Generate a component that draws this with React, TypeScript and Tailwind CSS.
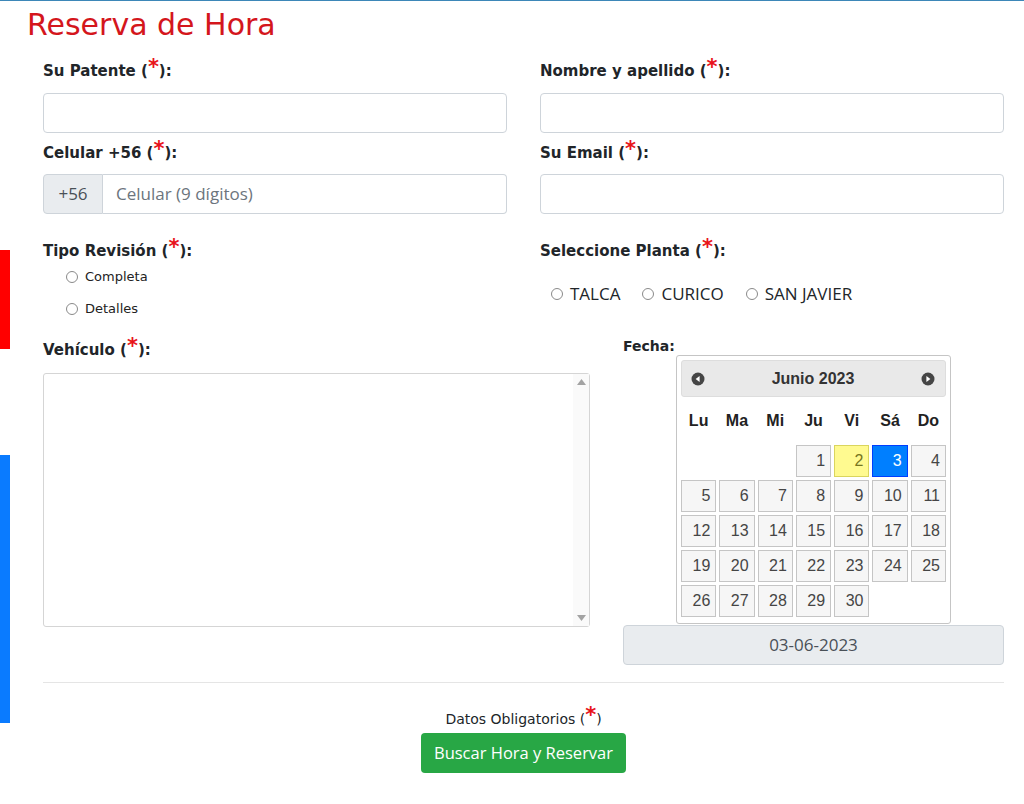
import React from 'react'

const verdana = { fontFamily: '"DejaVu Sans", Verdana, sans-serif' }
const segoe = { fontFamily: '"Open Sans", "Noto Sans", sans-serif' }
const arial = { fontFamily: '"Liberation Sans", Arial, sans-serif' }

function Req() {
  return <span className="relative top-[-2px] text-[21px] font-bold leading-[0] text-[#e8141b]">*</span>
}

function Label({ children }: { children: React.ReactNode }) {
  return (
    <label className="block h-[24px] text-[15px] font-bold leading-[22px] text-[#212529]" style={verdana}>
      {children}
    </label>
  )
}

function Radio({ label, className }: { label: string; className?: string }) {
  return (
    <span className={'flex items-center ' + (className ?? '')}>
      <span className="h-[12px] w-[12px] rounded-full border border-[#8a8a8a] bg-white" />
      <span className="ml-[7px]">{label}</span>
    </span>
  )
}

function Arrow({ dir }: { dir: 'prev' | 'next' }) {
  return (
    <svg width="14" height="14" viewBox="0 0 14 14">
      <circle cx="7" cy="7" r="6.5" fill="#454545" />
      {dir === 'prev' ? (
        <polygon points="8.6,4 4.6,7 8.6,10" fill="#fff" />
      ) : (
        <polygon points="5.4,4 9.4,7 5.4,10" fill="#fff" />
      )}
    </svg>
  )
}

function Calendar() {
  const days: (number | null)[] = [null, null, null]
  for (let d = 1; d <= 30; d++) days.push(d)
  const weekdays = ['Lu', 'Ma', 'Mi', 'Ju', 'Vi', 'Sá', 'Do']

  return (
    <div className="mx-auto mt-[2px] w-[275px] rounded-[3px] border border-[#c5c5c5] bg-white px-[4px] pb-[6px] pt-[4px]" style={arial}>
      <div className="flex h-[37px] items-center justify-between rounded-[3px] border border-[#dddddd] bg-[#e9e9e9] pl-[9px] pr-[10px]">
        <Arrow dir="prev" />
        <span className="text-[16px] font-bold text-[#333]">Junio 2023</span>
        <Arrow dir="next" />
      </div>
      <div className="grid h-[48px] grid-cols-7 items-center gap-x-[3px]">
        {weekdays.map((w) => (
          <span key={w} className="text-center text-[16px] font-bold text-[#222]">
            {w}
          </span>
        ))}
      </div>
      <div className="grid grid-cols-7 gap-x-[3px] gap-y-[3px]">
        {days.map((d, i) => {
          if (d === null) return <span key={i} className="h-[32px]" />
          let cls = 'border-[#c5c5c5] bg-[#f6f6f6] text-[#454545]'
          if (d === 2) cls = 'border-[#dad55e] bg-[#fffa90] text-[#777620]'
          if (d === 3) cls = 'border-[#003eff] bg-[#007fff] text-white'
          return (
            <span key={i} className={'flex h-[32px] items-center justify-end border pr-[5px] text-[16px] ' + cls}>
              {d}
            </span>
          )
        })}
      </div>
    </div>
  )
}

export default function App() {
  const input = 'block h-[40px] w-full rounded-[4px] border border-[#ced4da] bg-white'

  return (
    <div className="relative min-h-[804px] w-[1024px] overflow-hidden border-t border-[#3d87b8] bg-white">
      {/* side tabs */}
      <div className="absolute left-0 top-[249px] h-[99px] w-[10px] bg-[#ff0000]" />
      <div className="absolute left-0 top-[454px] h-[268px] w-[10px] bg-[#0a7bff]" />

      <h1 className="pl-[27px] pt-[6px] text-[30px] leading-[36px] text-[#d4161c]" style={verdana}>
        Reserva de Hora
      </h1>

      <div className="pl-[43px]">
        <div className="mt-[17px] grid grid-cols-[464px_464px] gap-x-[33px]">
          <div>
            <Label>
              Su Patente (<Req />):
            </Label>
            <input className={input + ' mt-[9px]'} />
            <div className="mt-[9px]">
              <Label>
                Celular +56 (<Req />):
              </Label>
            </div>
            <div className="mt-[8px] flex h-[40px] text-[17px]" style={segoe}>
              <span className="flex w-[60px] items-center justify-center rounded-l-[4px] border border-[#ced4da] bg-[#e9ecef] text-[#495057]">
                +56
              </span>
              <span className="flex flex-1 items-center rounded-r-[4px] border border-l-0 border-[#ced4da] pl-[13px] text-[#6c757d]">
                Celular (9 dígitos)
              </span>
            </div>
          </div>
          <div>
            <Label>
              Nombre y apellido (<Req />):
            </Label>
            <input className={input + ' mt-[9px]'} />
            <div className="mt-[9px]">
              <Label>
                Su Email (<Req />):
              </Label>
            </div>
            <input className={input + ' mt-[8px]'} />
          </div>
        </div>

        <div className="mt-[26px] grid grid-cols-[464px_464px] gap-x-[33px]">
          <div>
            <Label>
              Tipo Revisión (<Req />):
            </Label>
            <div className="flex flex-col gap-[6px] pl-[23px] text-[13px] text-[#222]" style={verdana}>
              <Radio label="Completa" className="h-[26px]" />
              <Radio label="Detalles" className="h-[26px]" />
            </div>
          </div>
          <div>
            <Label>
              Seleccione Planta (<Req />):
            </Label>
            <div className="mt-[18px] flex h-[24px] items-center gap-x-[22px] pl-[11px] text-[17px] text-[#212529]" style={segoe}>
              <Radio label="TALCA" />
              <Radio label="CURICO" />
              <Radio label="SAN JAVIER" />
            </div>
          </div>
        </div>

        <div className="mt-[17px] grid grid-cols-[547px_381px] gap-x-[33px]">
          <div>
            <Label>
              Vehículo (<Req />):
            </Label>
            <div className="relative mt-[10px]">
              <textarea className="block h-[254px] w-full resize-none overflow-hidden rounded-[3px] border border-[#d5d5d5] bg-white" />
              {/* scrollbar */}
              <div className="absolute bottom-[1px] right-[1px] top-[1px] flex w-[16px] flex-col items-center justify-between bg-[#fafafa] py-[5px]">
                <svg width="9" height="6" viewBox="0 0 9 6">
                  <polygon points="0,6 4.5,0 9,6" fill="#a3a3a3" />
                </svg>
                <svg width="9" height="6" viewBox="0 0 9 6">
                  <polygon points="0,0 9,0 4.5,6" fill="#a3a3a3" />
                </svg>
              </div>
            </div>
          </div>
          <div>
            <label className="block h-[14px] text-[14px] font-bold leading-[14px] text-[#212529]" style={verdana}>
              Fecha:
            </label>
            <Calendar />
            <div
              className="mt-[1px] flex h-[40px] items-center justify-center rounded-[4px] border border-[#ced4da] bg-[#e9ecef] text-[17px] text-[#495057]"
              style={segoe}
            >
              03-06-2023
            </div>
          </div>
        </div>

        <hr className="mt-[17px] w-[961px] border-t border-[#e5e5e5]" />

        <div className="flex w-[961px] flex-col items-center">
          <p className="mt-[26px] h-[20px] text-[14px] leading-[20px] text-[#212529]" style={verdana}>
            Datos Obligatorios (<Req />)
          </p>
          <button
            className="mt-[4px] h-[40px] w-[205px] rounded-[4px] bg-[#28a745] text-[16.5px] text-white"
            style={segoe}
          >
            Buscar Hora y Reservar
          </button>
        </div>
      </div>
    </div>
  )
}
